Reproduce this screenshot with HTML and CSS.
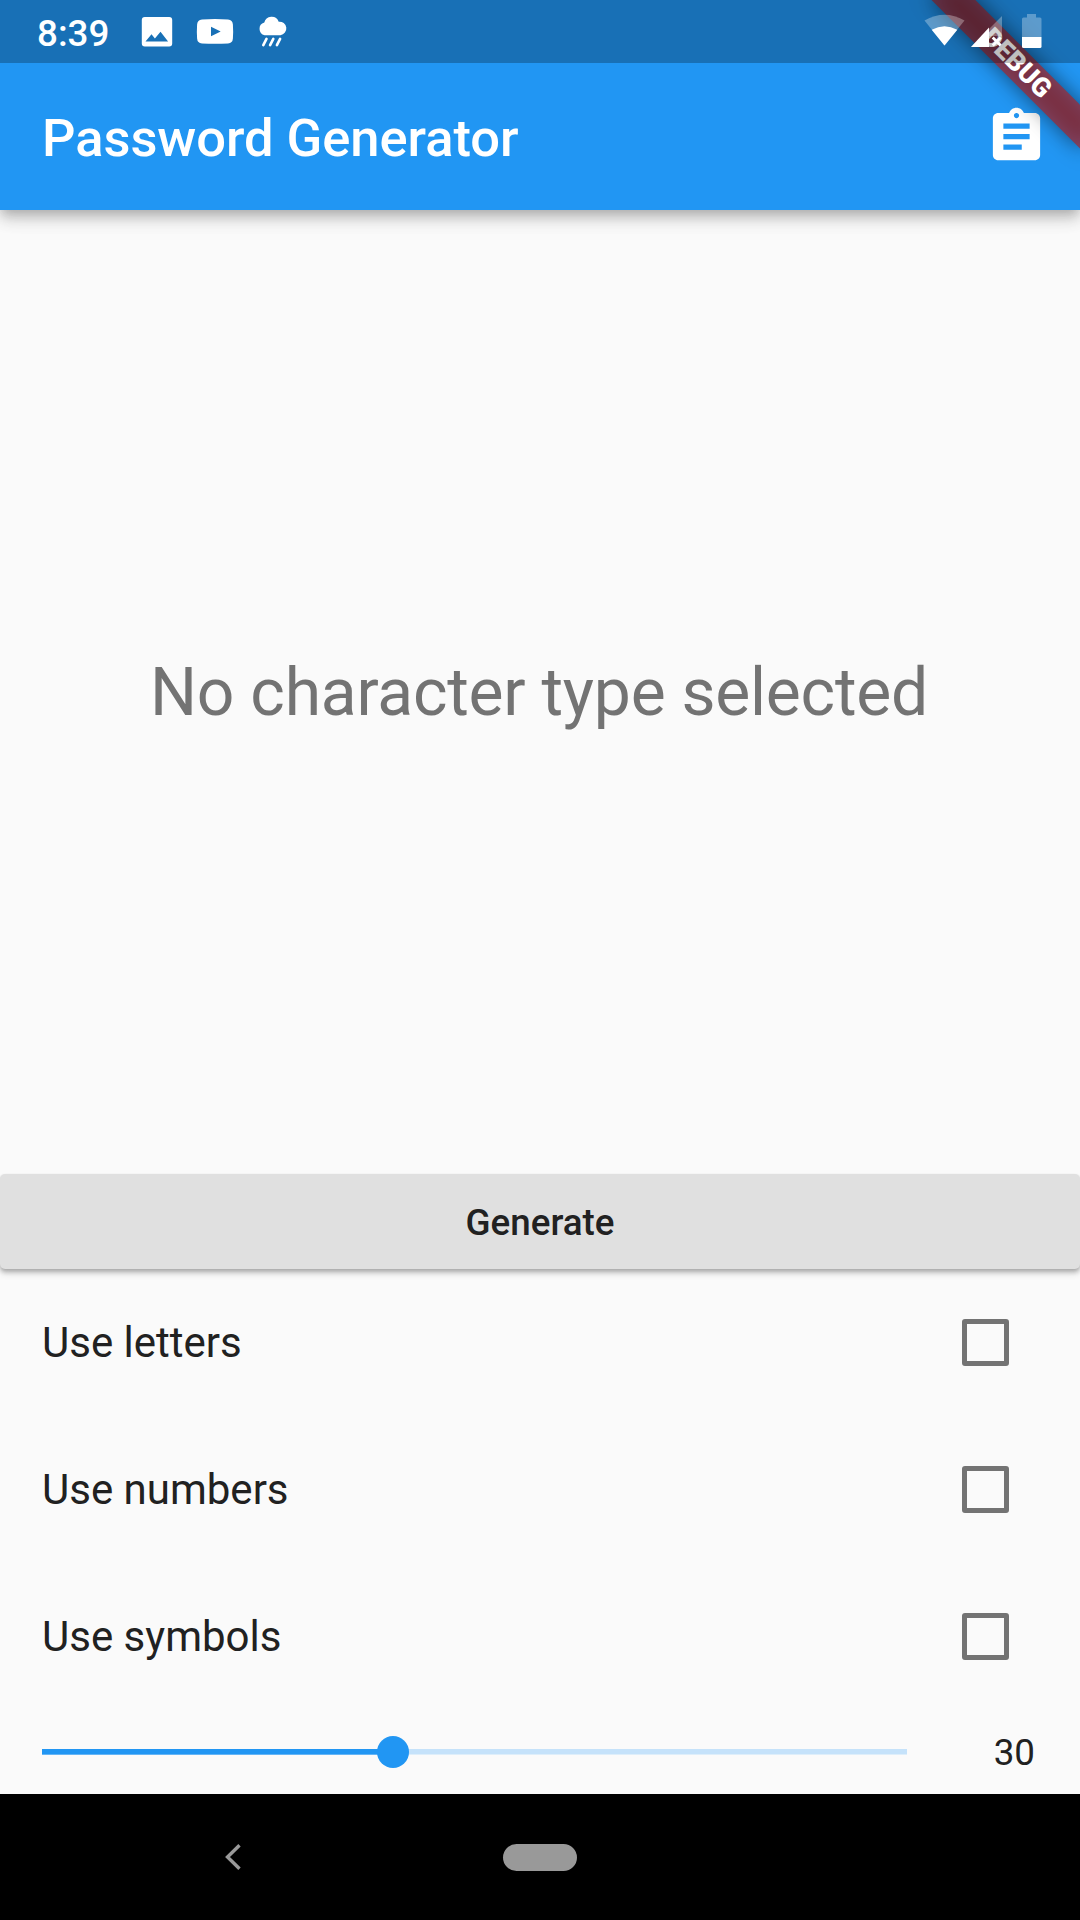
FILE: index.html
```html
<!DOCTYPE html>
<html lang="en">
<head>
<meta charset="utf-8">
<title>Password Generator</title>
<link rel="stylesheet" href="styles.css">
</head>
<body>
<div class="screen">
  <header class="header">
    <div class="status-bar">
      <span class="clock">8:39</span>
      <svg class="notifications" viewBox="0 0 160 63" fill="#fff">
        <path fill-rule="evenodd" d="M14.800 17h24.400a3 3 0 0 1 3 3v23.400a3 3 0 0 1-3 3H14.800a3 3 0 0 1-3-3V20a3 3 0 0 1 3-3zM15.500 41.400h22.600l-7.600-9.600-5.600 6.600-3.400-4.200z"/>
        <path fill-rule="evenodd" d="M72 19.400q13-.8 26 0 4.600.4 4.900 5 .5 7 0 14-.3 4.600-4.900 5-13 .8-26 0-4.600-.4-4.900-5-.5-7 0-14 .3-4.600 4.900-5zM81 26.700v9.600l9.700-4.800z"/>
        <path d="M134.600 35.200a6.500 6.500 0 0 1-.3-12.600 7.500 7.500 0 0 1 14.400-.9 6.800 6.800 0 0 1 1.700 13.500z"/>
        <path d="M136.500 38.800l-3.200 6.400M143.300 38.800l-3.200 6.400M150.100 38.800l-3.200 6.400" stroke="#fff" stroke-width="2.600" stroke-linecap="round"/>
      </svg>
      <svg class="indicators" viewBox="0 0 156 63" fill="#fff">
        <path opacity=".3" d="M20.500 45.500L.5 20.500Q20.500 9 40.500 20.500z"/>
        <path d="M20.500 45.500L7.700 29.800Q20.500 22.500 33.300 29.800z"/>
        <path opacity=".3" d="M47 47L78 16v20H65v11z"/>
        <path d="M47 47L65 27.500V47z"/>
        <path d="M68.700 37.500l8 8M76.700 37.500l-8 8" stroke="#fff" stroke-width="2.800"/>
        <path opacity=".3" d="M103 14h9v3.500h4q1.500 0 1.500 1.500v18H98V19q0-1.500 1.500-1.500h3.500z"/>
        <path d="M98 37h19.500v9.500q0 1.500-1.500 1.500H99.500q-1.500 0-1.500-1.500z"/>
      </svg>
    </div>
    <div class="app-bar">
      <h1 class="title">Password Generator</h1>
      <button class="icon-button" aria-label="Clipboard">
        <svg class="icon" viewBox="0 0 24 24" fill="#fff"><path d="M19 3h-4.180C14.400 1.840 13.300 1 12 1c-1.300 0-2.400.84-2.820 2H5c-1.100 0-2 .9-2 2v14c0 1.100.9 2 2 2h14c1.100 0 2-.9 2-2V5c0-1.100-.9-2-2-2zm-7 0c.55 0 1 .45 1 1s-.45 1-1 1-1-.45-1-1 .45-1 1-1zm2 14H7v-2h7v2zm3-4H7v-2h10v2zm0-4H7V7h10v2z"/></svg>
      </button>
    </div>
    <div class="debug-clip"><div class="debug-pivot"><div class="debug-shadow"></div><div class="debug-banner">DEBUG</div></div></div>
  </header>
  <main class="content">
    <div class="result">No character type selected</div>
    <button class="generate">Generate</button>
    <label class="option"><span>Use letters</span><span class="checkbox"></span></label>
    <label class="option"><span>Use numbers</span><span class="checkbox"></span></label>
    <label class="option"><span>Use symbols</span><span class="checkbox"></span></label>
    <div class="length">
      <div class="track"><div class="track-fill" style="width: 40.600%"></div><div class="thumb"></div></div>
      <span class="length-value">30</span>
    </div>
  </main>
  <nav class="nav-bar">
    <svg class="back" viewBox="0 0 18 28"><path d="M15.500 2.200L3.500 14l12 11.800" fill="none" stroke="#999" stroke-width="3.400"/></svg>
    <span class="home"></span>
    <span class="nav-space"></span>
  </nav>
</div>
</body>
</html>
```
FILE: styles.css
```css
* { box-sizing: border-box; }

body {
  margin: 0;
  font-family: Roboto, sans-serif;
  color: #212121;
}

button {
  margin: 0;
  padding: 0;
  border: 0;
  background: none;
  font: inherit;
  color: inherit;
}

svg { display: block; }

.screen {
  width: 1080px;
  height: 1920px;
  display: flex;
  flex-direction: column;
  overflow: hidden;
  background: #fafafa;
}

.header {
  position: relative;
  z-index: 1;
  height: 210px;
  flex: none;
  background: #2196f3;
  box-shadow: 0 5px 10px -2px rgba(0, 0, 0, .17), 0 10px 14px rgba(0, 0, 0, .14), 0 3px 24px rgba(0, 0, 0, .08);
}

.status-bar {
  position: relative;
  z-index: 2;
  height: 63px;
  display: flex;
  align-items: center;
  padding-left: 37px;
  background: rgba(0, 0, 0, .25);
  color: #fff;
}

.clock {
  width: 93px;
  font-size: 36.75px;
  font-weight: 500;
  line-height: 63px;
  padding-top: 3px;
}

.notifications { width: 160px; height: 63px; }
.indicators { width: 156px; height: 63px; margin-left: auto; }

.app-bar {
  height: 147px;
  display: flex;
  align-items: center;
  justify-content: space-between;
  padding-left: 42px;
}

.title {
  margin: 0;
  padding-top: 2px;
  font-size: 52.5px;
  font-weight: 500;
  line-height: 62px;
  letter-spacing: -.05px;
  color: #fff;
}

.icon-button {
  width: 127px;
  height: 126px;
  display: flex;
  align-items: center;
  padding-left: 32px;
}

.icon { width: 63px; height: 63px; }

/* Corner ribbon laid over the app bar */
.debug-clip {
  position: absolute;
  z-index: 1;
  top: 0;
  right: 0;
  width: 260px;
  height: 210px;
  overflow: hidden;
}

.debug-pivot {
  position: absolute;
  top: 0;
  left: 260px;
  width: 0;
  height: 0;
  transform: rotate(45deg);
}

.debug-shadow,
.debug-banner {
  position: absolute;
  left: -105px;
  top: 73.5px;
  width: 210px;
  height: 31.5px;
}

.debug-shadow {
  background: rgba(0, 0, 0, .5);
  filter: blur(10.4px);
}

.debug-banner {
  background: rgba(183, 28, 28, .627);
  color: #fff;
  font-size: 26.8px;
  font-weight: 900;
  line-height: 31.5px;
  text-align: center;
}

.content {
  flex: 1;
  display: flex;
  flex-direction: column;
}

.result {
  flex: 1;
  display: grid;
  place-items: center;
  padding-right: 2px;
  font-size: 66px;
  letter-spacing: -.25px;
  color: #737373;
}

.generate {
  height: 95px;
  padding-top: 2px;
  border-radius: 5px;
  background: #e0e0e0;
  box-shadow: 0 3px 4px rgba(0, 0, 0, .2), 0 5px 6px rgba(0, 0, 0, .12), 0 1px 3px rgba(0, 0, 0, .06);
  font-size: 36.75px;
  font-weight: 500;
}

.option {
  height: 147px;
  display: flex;
  align-items: center;
  justify-content: space-between;
  padding: 0 71px 0 42px;
  font-size: 42px;
}

.checkbox {
  width: 47px;
  height: 47px;
  border: 5px solid #737373;
  border-radius: 3px;
}

.length {
  height: 84px;
  display: flex;
  align-items: center;
  justify-content: space-between;
  padding: 0 45px 0 42px;
  font-size: 36.75px;
}

.track {
  width: 865px;
  height: 6px;
  display: flex;
  align-items: center;
  background: linear-gradient(#c5e2fa 5px, #deeefa 5px);
}

.track-fill {
  height: 6px;
  background: linear-gradient(#2196f3 5px, #64b5f6 5px);
}

.thumb {
  flex: none;
  width: 32px;
  height: 32px;
  margin-left: -16px;
  border-radius: 50%;
  background: #2196f3;
}

.nav-bar {
  height: 126px;
  flex: none;
  display: flex;
  align-items: center;
  justify-content: space-between;
  padding: 0 224px;
  background: #000;
}

.back { width: 18px; height: 28px; }

.home {
  width: 74px;
  height: 27px;
  border-radius: 14px;
  background: #999;
}

.nav-space { width: 18px; }
```
